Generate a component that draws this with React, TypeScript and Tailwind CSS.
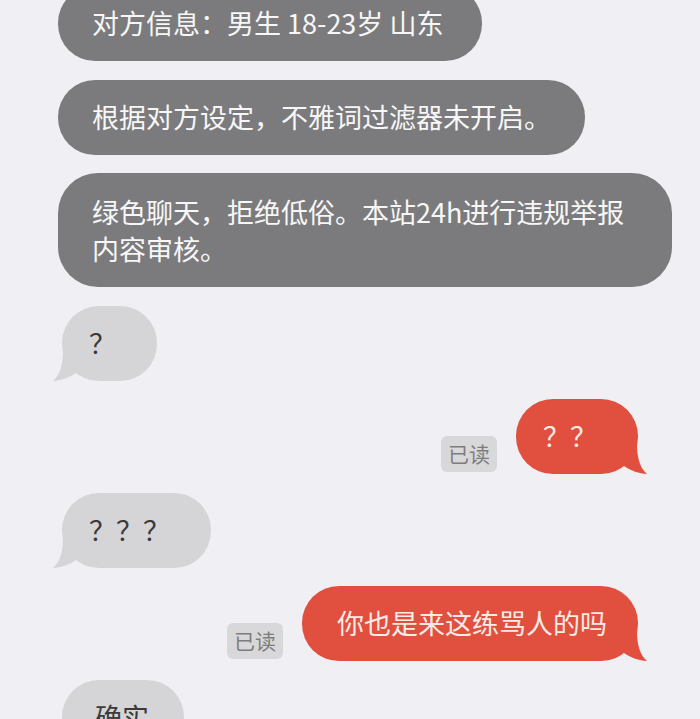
import React from 'react';

const cjk = "font-['Noto_Sans_CJK_SC','Noto_Sans',sans-serif]";

const SystemBubble = ({ text, width }: { text: string; width: string }) => (
  <div className={`ml-[-4px] flex h-[75px] items-center rounded-[37px] bg-[#7b7b7d] pl-[34px] text-[27px] text-[#f7f7f7] whitespace-nowrap ${width}`}>
    {text}
  </div>
);

const LeftTail = () => (
  <svg className="absolute bottom-0 left-[-9px]" width="30" height="30" viewBox="0 0 30 30">
    <path d="M10 0 C10 14 7 24 0 30 C8 29.5 16 27 23 22 L30 10 L20 0 Z" fill="#d5d5d7" />
  </svg>
);

const RightTail = () => (
  <svg className="absolute bottom-0 right-[-9px]" width="30" height="30" viewBox="0 0 30 30">
    <path d="M20 0 C20 14 23 24 30 30 C22 29.5 14 27 7 22 L0 10 L10 0 Z" fill="#e1503f" />
  </svg>
);

const LeftBubble = ({ text, width, pad }: { text: string; width: string; pad: string }) => (
  <div className={`relative flex h-[75px] shrink-0 items-center self-start rounded-[37px] bg-[#d5d5d7] text-[27px] text-[#3a3a3a] whitespace-nowrap ${width} ${pad}`}>
    <LeftTail />
    <span className="relative">{text}</span>
  </div>
);

const RightBubble = ({ text, width, pad }: { text: string; width: string; pad: string }) => (
  <div className="flex shrink-0 items-end gap-[19px] self-end">
    <div className="mb-[2px] flex h-[36px] w-[56px] items-center justify-center rounded-[6px] bg-[#d8d8da] text-[21px] text-[#7d7d7d]">
      已读
    </div>
    <div className={`relative flex h-[75px] items-center rounded-[37px] bg-[#e1503f] text-[27px] text-[#fbebe7] whitespace-nowrap ${width} ${pad}`}>
      <RightTail />
      <span className="relative">{text}</span>
    </div>
  </div>
);

export default function App() {
  return (
    <div className={`flex h-[719px] w-[700px] flex-col gap-[18.5px] overflow-hidden bg-[#f0eff4] px-[62px] ${cjk}`}>
      <div className="mt-[-14px] shrink-0">
        <SystemBubble text="对方信息：男生 18-23岁 山东" width="w-[424px]" />
      </div>
      <div className="shrink-0">
        <SystemBubble text="根据对方设定，不雅词过滤器未开启。" width="w-[527px]" />
      </div>
      <div className="ml-[-4px] w-[614px] shrink-0 rounded-[40px] bg-[#7b7b7d] py-[20px] pl-[34px] pr-[30px] text-[27px] leading-[37px] text-[#f7f7f7] whitespace-nowrap">
        绿色聊天，拒绝低俗。本站24h进行违规举报
        <br />
        内容审核。
      </div>
      <LeftBubble text="？" width="w-[95px]" pad="pl-[27px]" />
      <RightBubble text="？？" width="w-[122px]" pad="pl-[27px]" />
      <LeftBubble text="？？？" width="w-[149px]" pad="pl-[27px]" />
      <RightBubble text="你也是来这练骂人的吗" width="w-[336px]" pad="pl-[35px]" />
      <LeftBubble text="确实" width="w-[122px]" pad="pl-[33px]" />
    </div>
  );
}
